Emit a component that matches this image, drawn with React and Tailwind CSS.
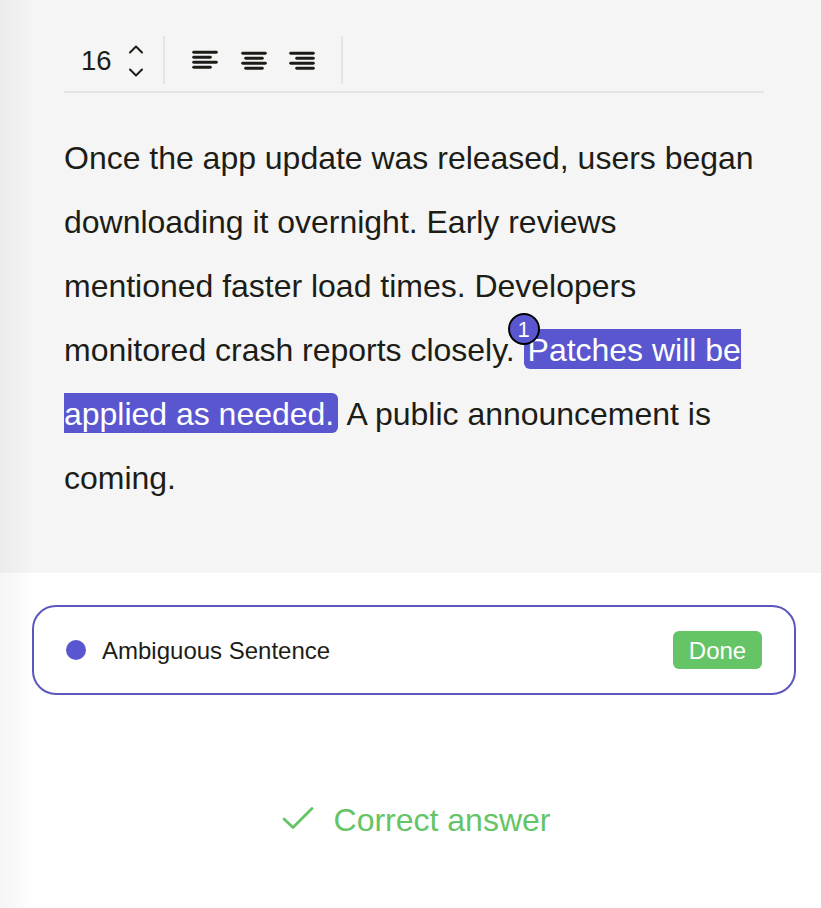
const lines = {
  left: [[0, 24], [0, 18], [0, 24], [0, 18]],
  center: [[0, 24], [3, 21], [0, 24], [3, 21]],
  right: [[0, 24], [6, 24], [0, 24], [6, 24]],
};

function AlignIcon({ type }) {
  return (
    <svg width="26" height="20" viewBox="-1 0 26 20" fill="none" stroke="#1d1d17" strokeWidth="2.9" strokeLinecap="round">
      {lines[type].map(([a, b], i) => (
        <path key={i} d={`M${a + 0.7} ${2.2 + i * 5}H${b - 0.7}`} />
      ))}
    </svg>
  );
}

function Toolbar() {
  return (
    <div className="flex h-[57px] items-start border-b-2 border-[#e4e4e4]">
      <span className="ml-[17px] mt-[9px] w-[30px] text-[27.5px] leading-8">16</span>
      <div className="ml-[17px] mt-[9px] flex flex-col gap-[14px]">
        <svg width="16" height="9" viewBox="0 0 16 9" fill="none" stroke="#1d1d17" strokeWidth="2" strokeLinecap="round" strokeLinejoin="round">
          <path d="M2 7.5L8 1.5L14 7.5" />
        </svg>
        <svg width="16" height="9" viewBox="0 0 16 9" fill="none" stroke="#1d1d17" strokeWidth="2" strokeLinecap="round" strokeLinejoin="round">
          <path d="M2 1.5L8 7.5L14 1.5" />
        </svg>
      </div>
      <div className="ml-[19px] h-12 w-0.5 bg-[#e4e4e4]" />
      <div className="ml-[27px] mt-[14px]"><AlignIcon type="left" /></div>
      <div className="ml-[23px] mt-[15px]"><AlignIcon type="center" /></div>
      <div className="ml-[22px] mt-[15px]"><AlignIcon type="right" /></div>
      <div className="ml-[26px] h-12 w-0.5 bg-[#e4e4e4]" />
    </div>
  );
}

export default function App() {
  return (
    <div className="relative h-[908px] w-[821px] overflow-hidden bg-white font-['Liberation_Sans',Arial,sans-serif] text-[#1d1d17]">
      <section className="h-[573px] bg-[#f5f5f5] pl-16 pr-[57px] pt-9">
        <Toolbar />
        <p className="mt-[33px] whitespace-nowrap text-[32px] leading-[64px] tracking-[-0.015px]">
          Once the app update was released, users began<br />
          downloading it overnight. Early reviews<br />
          mentioned faster load times. Developers<br />
          monitored crash reports closely.{' '}
          <mark className="relative rounded-md bg-[#5956d0] px-1 pb-px pt-[3px] text-white">
            <span className="absolute -left-4 -top-4 flex size-8 items-center justify-center rounded-full border-2 border-black bg-[#5956d0] pt-px text-[22px] leading-none">1</span>
            Patches will be<br />
            applied as needed.
          </mark>{' '}
          <span className="-ml-[0.5px]">A public announcement is</span><br />
          coming.
        </p>
      </section>
      <main className="flex flex-col pl-8 pr-[25px] pt-8">
        <div className="flex h-[90px] items-center rounded-3xl border-2 border-[#5b57bd] px-8">
          <span className="size-5 rounded-full bg-[#5956d0]" />
          <span className="ml-4 pt-0.5 text-2xl">Ambiguous Sentence</span>
          <button className="ml-auto h-[38px] w-[89px] rounded-md bg-[#65c466] pt-0.5 text-2xl text-white">Done</button>
        </div>
        <div className="mt-[105px] flex h-10 items-center justify-center pl-1 text-[32px] text-[#65c466]">
          <svg className="mb-[5px] mr-5" width="32" height="24" viewBox="0 0 32 24" fill="none" stroke="currentColor" strokeWidth="2.8" strokeLinecap="round" strokeLinejoin="round">
            <path d="M2 13L11 21.5L30 2.5" />
          </svg>
          <span>Correct answer</span>
        </div>
      </main>
      <div className="pointer-events-none absolute inset-y-0 left-0 w-9 bg-gradient-to-r from-black/4 to-transparent" />
    </div>
  );
}
